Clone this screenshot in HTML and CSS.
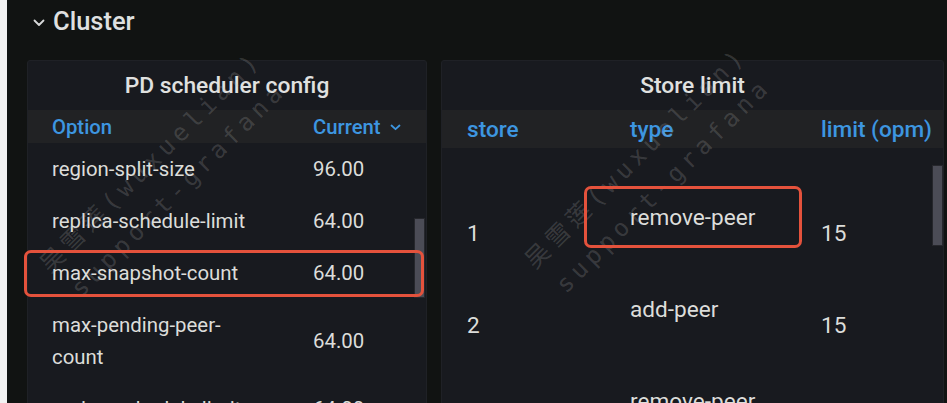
FILE: index.html
```html
<!DOCTYPE html>
<html lang="en">
<head>
<meta charset="utf-8">
<title>Cluster</title>
<link rel="stylesheet" href="styles.css">
</head>
<body>
<div class="page">
  <div class="row-header">
    <svg class="chev" width="12" height="8" viewBox="0 0 12 8"><path d="M1.5 1.5 L6 6 L10.5 1.5" fill="none" stroke="#d8d9da" stroke-width="1.8" stroke-linecap="round" stroke-linejoin="round"/></svg>
    <span class="row-title">Cluster</span>
  </div>
  <div class="panels">
    <section class="panel panel-left">
      <div class="panel-title">PD scheduler config</div>
      <div class="ltable">
        <div class="lhead">
          <div class="lc1">Option</div>
          <div class="lc2">Current <svg class="sort" width="11" height="7" viewBox="0 0 11 7"><path d="M1.5 1.5 L5.5 5.2 L9.5 1.5" fill="none" stroke="#3d96e0" stroke-width="1.8" stroke-linecap="round" stroke-linejoin="round"/></svg></div>
        </div>
        <div class="lrow"><div class="lc1">region-split-size</div><div class="lc2">96.00</div></div>
        <div class="lrow"><div class="lc1">replica-schedule-limit</div><div class="lc2">64.00</div></div>
        <div class="lrow"><div class="lc1">max-snapshot-count</div><div class="lc2">64.00</div></div>
        <div class="lrow"><div class="lc1">max-pending-peer-count</div><div class="lc2">64.00</div></div>
        <div class="lrow"><div class="lc1">region-schedule-limit</div><div class="lc2">64.00</div></div>
      </div>
      <div class="scroll scroll-left"></div>
    </section>
    <section class="panel panel-right">
      <div class="panel-title">Store limit</div>
      <div class="rtable">
        <div class="rhead">
          <div>store</div><div>type</div><div>limit (opm)</div>
        </div>
        <div class="rbody">
          <div class="rrow"><div>1</div><div class="rtype">remove-peer</div><div>15</div></div>
          <div class="rrow"><div>2</div><div class="rtype">add-peer</div><div>15</div></div>
          <div class="rrow"><div>2</div><div class="rtype">remove-peer</div><div>15</div></div>
        </div>
      </div>
      <div class="scroll scroll-right"></div>
    </section>
  </div>
  <div class="mark mark-left">吴雪莲(wuxuelian)<br>support-grafana</div>
  <div class="mark mark-right">吴雪莲(wuxuelian)<br>support-grafana</div>
  <div class="hl hl-left"></div>
  <div class="hl hl-right"></div>
</div>
</body>
</html>
```

FILE: styles.css
```css
html, body {
  margin: 0;
  padding: 0;
}
body {
  width: 947px;
  height: 403px;
  overflow: hidden;
  background: #f2f2f2;
  font-family: Roboto, "Noto Sans", "Liberation Sans", sans-serif;
  color: #dcddda;
}
.page {
  position: relative;
  margin-left: 7px;
  height: 403px;
  background: #111312;
  padding: 0 3px 0 20px;
  overflow: hidden;
}
.row-header {
  height: 42px;
  margin-bottom: 18px;
  display: flex;
  align-items: center;
  padding-left: 6px;
  gap: 8px;
}
.chev {
  margin-top: 3px;
}
.row-title {
  font-size: 25.5px;
  font-weight: 500;
  color: #dfe0e0;
}
.panels {
  display: flex;
  gap: 14px;
  height: 400px;
}
.panel {
  position: relative;
  background: #181a1f;
  border: 1px solid #1f2126;
  border-radius: 3px;
  box-sizing: border-box;
  overflow: hidden;
}
.panel-left {
  width: 400px;
}
.panel-right {
  flex: 1;
}
.panel-title {
  height: 49px;
  display: flex;
  align-items: center;
  justify-content: center;
  font-size: 22.8px;
  font-weight: 500;
  color: #e0e1e0;
}
.lhead, .lrow {
  display: grid;
  grid-template-columns: 261px 1fr;
  padding-left: 24px;
  align-items: center;
}
.lhead {
  height: 33px;
  background: #212224;
  color: #3d96e0;
  font-size: 20.3px;
  font-weight: 500;
}
.lc1 {
  width: 205px;
}
.lc2 {
  display: flex;
  align-items: center;
  gap: 9px;
}
.sort {
  margin-top: 2px;
}
.lrow {
  padding-top: 10px;
  padding-bottom: 10px;
  font-size: 20.4px;
  line-height: 32px;
}
.rhead, .rrow {
  display: grid;
  grid-template-columns: 163px 191px 1fr;
  padding-left: 25px;
  align-items: center;
}
.rhead {
  height: 38px;
  background: #212224;
  color: #3d96e0;
  font-size: 22.6px;
  font-weight: 500;
}
.rbody {
  padding-top: 39px;
}
.rrow {
  height: 92px;
  font-size: 22.6px;
}
.rtype {
  padding-bottom: 32px;
}
.scroll {
  position: absolute;
  width: 9px;
  background: #4b4c56;
  border: 1px solid #26272c;
}
.scroll-left {
  right: 1px;
  top: 157px;
  height: 78px;
}
.scroll-right {
  right: 0;
  top: 104px;
  height: 79px;
}
.mark {
  position: absolute;
  transform: translate(-50%, -50%) rotate(-45deg);
  white-space: nowrap;
  text-align: center;
  font-family: "DejaVu Sans Mono", "Noto Sans CJK SC", monospace;
  font-size: 24px;
  letter-spacing: 5px;
  line-height: 39px;
  color: rgba(190, 190, 190, 0.21);
  pointer-events: none;
}
.mark-left {
  left: 158px;
  top: 176px;
}
.mark-right {
  left: 643px;
  top: 172px;
}
.hl {
  position: absolute;
  border: 3px solid #e4523c;
  border-radius: 7px;
  box-sizing: border-box;
}
.hl-left {
  left: 17px;
  top: 250px;
  width: 400px;
  height: 47px;
}
.hl-right {
  left: 577px;
  top: 186px;
  width: 218px;
  height: 62px;
}
```
